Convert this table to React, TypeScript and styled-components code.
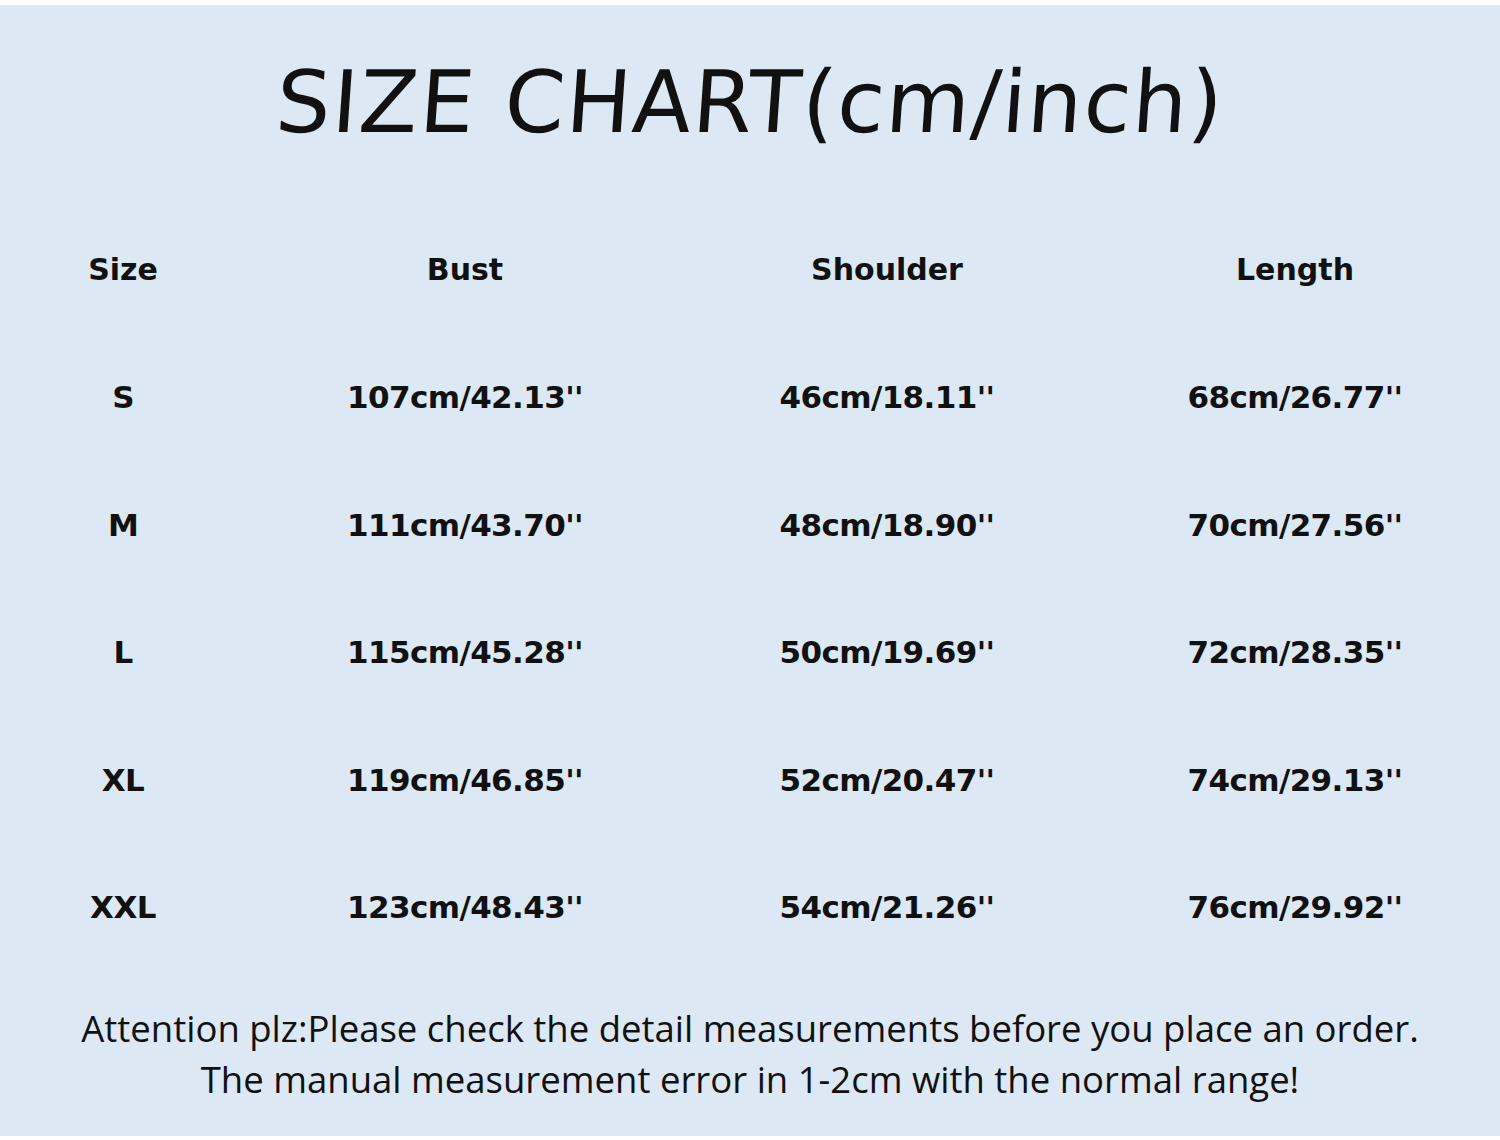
import React from 'react';
import styled, { createGlobalStyle } from 'styled-components';

const Global = createGlobalStyle`
  html, body { margin: 0; padding: 0; background: #ffffff; }
  #root { width: 1500px; height: 1140px; }
`;

const Sheet = styled.div`
  margin-top: 5px;
  width: 1500px;
  height: 1131px;
  background: #dce9f4;
  color: #111111;
  display: flex;
  flex-direction: column;
`;

const Title = styled.h1`
  margin: 0;
  height: 201px;
  display: flex;
  align-items: center;
  justify-content: center;
  padding-bottom: 8px;
  box-sizing: border-box;
  font-family: 'DejaVu Sans', sans-serif;
  font-weight: 400;
  font-size: 86px;
  letter-spacing: 1.6px;
  transform: skewX(-4deg);
`;

const Table = styled.div`
  display: grid;
  grid-template-columns: 246px 438px 406px 1fr;
  grid-auto-rows: 127.5px;
`;

const Cell = styled.div<{ $head?: boolean }>`
  display: flex;
  align-items: center;
  justify-content: center;
  font-family: 'DejaVu Sans', Verdana, sans-serif;
  font-weight: 700;
  font-size: ${({ $head }) => ($head ? '30px' : '31px')};
  letter-spacing: ${({ $head }) => ($head ? '0' : '-0.6px')};
`;

const Note = styled.p`
  margin: 32px 0 0;
  text-align: center;
  font-family: 'Open Sans', 'Noto Sans', sans-serif;
  font-size: 36.5px;
  line-height: 51px;
`;

const head = ['Size', 'Bust', 'Shoulder', 'Length'];

const rows = [
  ['S', "107cm/42.13''", "46cm/18.11''", "68cm/26.77''"],
  ['M', "111cm/43.70''", "48cm/18.90''", "70cm/27.56''"],
  ['L', "115cm/45.28''", "50cm/19.69''", "72cm/28.35''"],
  ['XL', "119cm/46.85''", "52cm/20.47''", "74cm/29.13''"],
  ['XXL', "123cm/48.43''", "54cm/21.26''", "76cm/29.92''"],
];

export default function App() {
  return (
    <>
      <Global />
      <Sheet>
        <Title>SIZE CHART(cm/inch)</Title>
        <Table>
          {head.map((h) => (
            <Cell key={h} $head>
              {h}
            </Cell>
          ))}
          {rows.map((r) => r.map((c, i) => <Cell key={r[0] + i}>{c}</Cell>))}
        </Table>
        <Note>
          Attention plz:Please check the detail measurements before you place an order.
          <br />
          The manual measurement error in 1-2cm with the normal range!
        </Note>
      </Sheet>
    </>
  );
}
